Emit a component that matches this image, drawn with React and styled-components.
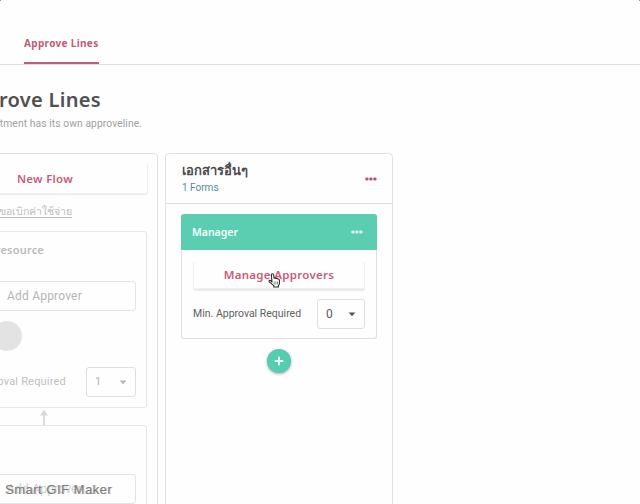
import React from 'react';
import styled, { createGlobalStyle } from 'styled-components';

const Global = createGlobalStyle`
  * { box-sizing: border-box; }
  html, body { margin: 0; background: #fefefe; overflow: hidden; }
  body { font-family: "Noto Sans", "Noto Sans Thai", sans-serif; }
  button { font: inherit; background: none; border: 0; padding: 0; }
`;

const Page = styled.div`
  position: relative;
  width: 640px;
  height: 504px;
  overflow: hidden;
  background: #fefefe;
`;

const Label = styled.span`
  display: block;
  flex: none;
  white-space: nowrap;
  font-family: ${p => p.$font || '"Noto Sans", sans-serif'};
  font-size: ${p => p.$size || 11}px;
  font-weight: ${p => p.$weight || 400};
  line-height: ${p => p.$line || 16}px;
  letter-spacing: ${p => p.$track || 0}px;
  color: ${p => p.$color || '#5c5c5c'};
  text-decoration: ${p => (p.$underline ? 'underline' : 'none')};
  text-underline-offset: 2px;
`;

const TabBar = styled.nav`
  display: flex;
  height: 65px;
  padding-left: 24px;
  border-bottom: 1px solid #dddddd;
`;

const Tab = styled.div`
  width: 75px;
  height: 64px;
  padding-top: 35px;
  border-bottom: 2px solid #b9607a;
`;

const Intro = styled.header`
  display: flex;
  flex-direction: column;
  height: 88px;
  padding-top: 20px;
`;

const Clip = styled.div`
  display: flex;
  justify-content: flex-end;
  width: ${p => p.$width}px;
`;

const Board = styled.main`
  display: flex;
  gap: 7px;
  height: 351px;
  margin-left: -69px;
`;

const Column = styled.section`
  flex: none;
  width: ${p => p.$width}px;
  height: 370px;
  border: 1px solid #e2e2e2;
  border-radius: 4px;
`;

const FlowColumn = styled(Column)`
  display: flex;
  flex-direction: column;
  padding: 9px 9px 0 10px;
`;

const RaisedButton = styled.button`
  display: flex;
  align-items: center;
  justify-content: center;
  flex: none;
  width: 100%;
  height: ${p => p.$height}px;
  border: 1px solid #f0f0f0;
  border-top-color: transparent;
  border-radius: 3px;
  box-shadow: 0 ${p => p.$lift}px 1px #e9e9e9;
`;

const FlowName = styled.div`
  display: flex;
  justify-content: flex-end;
  padding: 9px 76px 0 0;
  height: 37px;
`;

const Step = styled.div`
  flex: none;
  width: 205px;
  height: ${p => p.$height}px;
  border: 1px solid #e6e6e6;
  border-radius: 3px;
  padding: 0 10px;
`;

const Steps = styled.div`
  padding-top: 12px;
`;

const StepTitle = styled.div`
  display: flex;
  justify-content: flex-end;
  height: 49px;
  padding: 10px 92px 0 0;
`;

const OutlineButton = styled.button`
  display: flex;
  align-items: center;
  justify-content: center;
  width: 183px;
  height: 30px;
  border: 1px solid #e3e3e3;
  border-radius: 3px;
`;

const Avatar = styled.div`
  width: 30px;
  height: 30px;
  margin: 10px 0 16px 39px;
  border-radius: 50%;
  background: #e3e3e3;
`;

const FieldRow = styled.div`
  display: flex;
  align-items: center;
  justify-content: ${p => (p.$end ? 'flex-end' : 'space-between')};
  gap: ${p => (p.$end ? 20 : 8)}px;
`;

const Select = styled.div`
  display: flex;
  flex: none;
  align-items: center;
  justify-content: space-between;
  width: ${p => p.$width}px;
  height: 30px;
  padding: 0 8px;
  border: 1px solid #dfdfdf;
  border-radius: 3px;
`;

const Connector = styled.div`
  height: 17px;
  padding-left: 96px;
  svg { display: block; }
`;

const LastAction = styled.div`
  padding-top: 48px;
`;

const ColumnHead = styled.div`
  display: flex;
  align-items: center;
  justify-content: space-between;
  height: 50px;
  padding: 0 15px 0 16px;
  border-bottom: 1px solid #dedede;
`;

const ColumnTitle = styled.div`
  padding-top: 2px;
`;

const ColumnBody = styled.div`
  display: flex;
  flex-direction: column;
  align-items: center;
  gap: 10px;
  padding-top: 10px;
`;

const Approval = styled.div`
  width: 196px;
  height: 125px;
  border: 1px solid #dfdfdf;
  border-top: 0;
  border-radius: 3px;
`;

const ApprovalHead = styled.div`
  display: flex;
  align-items: center;
  justify-content: space-between;
  height: 36px;
  margin: 0 -1px;
  padding: 0 14px 0 11px;
  border-radius: 3px 3px 0 0;
  background: #5bceb1;
`;

const ApprovalBody = styled.div`
  display: flex;
  flex-direction: column;
  gap: 10px;
  padding: 11px 11px 0;
`;

const AddButton = styled.button`
  display: flex;
  align-items: center;
  justify-content: center;
  width: 24px;
  height: 24px;
  border-radius: 50%;
  background: #55cdaf;
  box-shadow: 0 1px 3px #aaaaaa;
`;

const Cursor = styled.svg`
  position: absolute;
  left: 268px;
  top: 273px;
`;

const Watermark = styled.div`
  position: absolute;
  left: 5px;
  top: 482px;
  text-shadow: 1px 0 0 #cccccc;
`;

const Corner = styled.i`
  position: absolute;
  top: 0;
  ${p => p.$side}: 0;
  width: 1px;
  height: 1px;
  background: #999999;
`;

const Caret = ({ color }) => (
  <svg width="8" height="5" viewBox="0 0 8 5"><path d="M.7.5h6.6L4 4.3Z" fill={color} /></svg>
);

const Dots = ({ color }) => (
  <svg width="12" height="4" viewBox="0 0 12 4" fill={color}>
    <rect x=".3" y=".4" width="3.2" height="3.2" rx="1.1" />
    <rect x="4.3" y=".4" width="3.2" height="3.2" rx="1.1" />
    <rect x="8.3" y=".4" width="3.2" height="3.2" rx="1.1" />
  </svg>
);

const pink = '#cf5a76';
const body = 'Roboto, sans-serif';

export default function App() {
  return (
    <>
      <Global />
      <Page>
        <TabBar>
          <Tab><Label $size={10} $weight={700} $color="#c05d76" $track={0.33}>Approve Lines</Label></Tab>
        </TabBar>
        <Intro>
          <Clip $width={101}><Label $size={20} $weight={600} $line={30} $track={0.3} $color="#505050">Approve Lines</Label></Clip>
          <Clip $width={142}><Label $font={body} $size={10.3} $line={17} $track={0.08} $color="#a0a0a0">Each department has its own approveline.</Label></Clip>
        </Intro>
        <Board>
          <FlowColumn $width={227}>
            <RaisedButton $height={31} $lift={1}><Label $size={11.5} $weight={600} $track={0.25} $color={pink}>New Flow</Label></RaisedButton>
            <FlowName><Label $size={10.5} $underline $color="#bdbdbd">ขอเบิกค่าใช้จ่าย</Label></FlowName>
            <Steps>
              <Step $height={177}>
                <StepTitle><Label $size={11} $weight={600} $track={0.2} $color="#bababa">Human resource</Label></StepTitle>
                <OutlineButton><Label $font={body} $size={12} $track={0.2} $color="#b5b5b5">Add Approver</Label></OutlineButton>
                <Avatar />
                <FieldRow $end>
                  <Label $font={body} $track={0.2} $color="#bebebe">Min. Approval Required</Label>
                  <Select $width={50}><Label $font={body} $color="#b2b2b2">1</Label><Caret color="#b5b5b5" /></Select>
                </FieldRow>
              </Step>
              <Connector>
                <svg width="12" height="17" viewBox="0 0 12 17"><path d="M6 17V6" stroke="#dcdcdc" strokeWidth="2" /><path d="m2 7.5 4-6 4 6Z" fill="#d8d8d8" /></svg>
              </Connector>
              <Step $height={120}>
                <LastAction><OutlineButton><Label $font={body} $size={12} $track={0.2} $color="#d0d0d0">Add Approver</Label></OutlineButton></LastAction>
              </Step>
            </Steps>
          </FlowColumn>
          <Column $width={228}>
            <ColumnHead>
              <ColumnTitle>
                <Label $size={13} $weight={600} $line={17} $color="#4c4c4c">เอกสารอื่นๆ</Label>
                <Label $font={body} $size={10} $line={18} $color="#568da0">1 Forms</Label>
              </ColumnTitle>
              <Dots color="#bd5370" />
            </ColumnHead>
            <ColumnBody>
              <Approval>
                <ApprovalHead>
                  <Label $size={10.5} $weight={600} $color="#f5fffc">Manager</Label>
                  <Dots color="#ddf8f0" />
                </ApprovalHead>
                <ApprovalBody>
                  <RaisedButton $height={28} $lift={2}><Label $size={11.5} $weight={600} $track={0.3} $color={pink}>Manage Approvers</Label></RaisedButton>
                  <FieldRow>
                    <Label $font={body} $size={10.5} $line={18} $color="#606060">Min. Approval Required</Label>
                    <Select $width={48}><Label $font={body} $size={12}>0</Label><Caret color="#555555" /></Select>
                  </FieldRow>
                </ApprovalBody>
              </Approval>
              <AddButton aria-label="Add step">
                <svg width="10" height="10" viewBox="0 0 10 10"><path d="M5 .7v8.6M.7 5h8.6" stroke="#f4fffb" strokeWidth="2" /></svg>
              </AddButton>
            </ColumnBody>
          </Column>
        </Board>
        <Cursor width="13" height="15" viewBox="0 0 13 15">
          <path d="M4 9 3.4 2.2Q3.3.8 4.4.8t1.3 1.4l.4 3q1.2-.7 1.8.3 1.2-.5 1.8.5 1.5-.3 1.7 1.2l.1 3q-.2 1.5-1.1 2.3V14H5.8v-1.4L1.2 8.8Q.7 7.5 2 7.2Z" fill="#fff" stroke="#292929" strokeWidth="1.1" strokeLinejoin="round" />
          <path d="M6.2 8.5v3M7.9 8.5v3M9.5 8.5v3" stroke="#555" strokeWidth=".7" />
        </Cursor>
        <Watermark><Label $font={'"Liberation Sans", sans-serif'} $size={13} $color="#7c7c7c" $track={0.5}>Smart GIF Maker</Label></Watermark>
        <Corner $side="left" />
        <Corner $side="right" />
      </Page>
    </>
  );
}
